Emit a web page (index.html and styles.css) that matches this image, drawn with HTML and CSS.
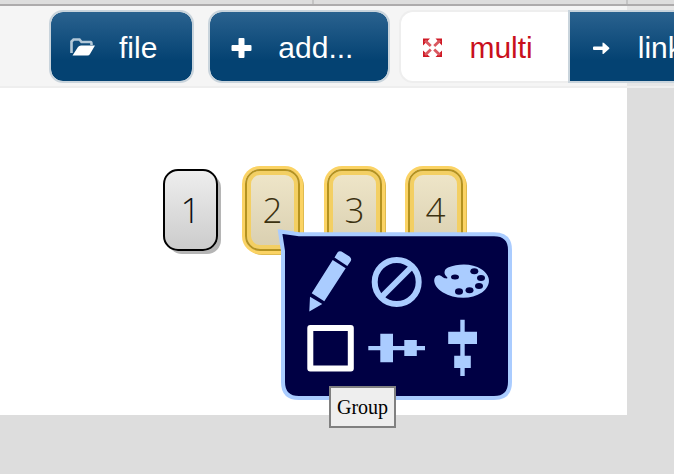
FILE: index.html
```html
<!DOCTYPE html>
<html lang="en">
<head>
<meta charset="utf-8">
<title>Diagram editor</title>
<link rel="stylesheet" href="styles.css">
</head>
<body>
<div class="ruler"><span></span><span></span></div>
<div class="editor">
  <header class="toolbar">
    <button class="tool" type="button">
      <svg class="glyph" viewBox="0 0 28 24" aria-hidden="true"><path d="M2.500 17V5.500l2-2h6l2 2.500h9q1 0 1 2v1" fill="none" stroke="#b3c8d8" stroke-width="2.600"/><path d="M3.500 19.500 9 11q1-1.500 3-1.500h14l-5 8.500q-.8 1.500-2.500 1.500H4z" fill="#fff"/></svg>
      file
    </button>
    <button class="tool" type="button">
      <svg class="glyph" viewBox="0 0 28 24" aria-hidden="true"><path d="M11.500 3h4v7h7v4h-7v7h-4v-7h-7v-4h7z" fill="#fff" stroke="#fff" stroke-width="2" stroke-linejoin="round"/></svg>
      add...
    </button>
    <div class="group">
      <button class="tool active" type="button" aria-pressed="true">
        <svg class="glyph" viewBox="0 0 28 24" aria-hidden="true"><g fill="#cf1824"><path d="M4 2.500h7L4 9.500zM16.500 2.500h6.500v7zM4 14.500l7 6.500H4zM23 14.500V21h-6.500z"/><path d="m6 4.500 15 14.500M21 4.500 6 19" stroke="#da5860" stroke-width="2.800" stroke-dasharray="8 4.800"/></g></svg>
        multi
      </button>
      <button class="tool" type="button">
        <svg class="glyph" viewBox="0 0 28 24" aria-hidden="true"><path d="M6 10.500h8.500V7q0-1 1.500 0l5 4.500q1 .8 0 1.500l-5 4.500q-1.500 1-1.500 0V14H6q-1 0-1-1v-1.500q0-1 1-1z" fill="#fff"/></svg>
        link
      </button>
    </div>
  </header>
  <main class="paper">
    <div class="node n1">1</div>
    <div class="node n2 selected">2</div>
    <div class="node n3 selected">3</div>
    <div class="node n4 selected">4</div>
    <div class="menu">
      <svg class="bubble" viewBox="0 0 240 176" aria-hidden="true"><path d="M4 5.500 23 8.300H218Q234 8.300 234 24V156Q234 172 218 172H23Q7 172 7 156V25Z"/></svg>
      <div class="actions">
        <button type="button" aria-label="Edit"><svg viewBox="0 0 66 66"><path d="M40.500 4.500q1.500-2 4-1l8 5q2.500 2 1.300 4.500l-3.500 5-12.800-8.500zM35.700 12l13 8.300-21.400 33-12.600-8zM13 48.700 25.300 56l-13 7.500z"/></svg></button>
        <button type="button" aria-label="Disable"><svg viewBox="0 0 66 66"><g fill="none" stroke="#acf" stroke-width="6"><circle cx="33.700" cy="34" r="22"/><path d="m18 49.500 31-31"/></g></svg></button>
        <button type="button" aria-label="Colour"><svg viewBox="0 0 66 66"><path d="M19 19.500C30 15 44 15.500 52 21 63 28 62 38 53 44.500 42 52 25 51 14 44.500 8 41 4 35 5.500 30.500 7 26.500 11 26.500 13.500 29 16.500 31 18.500 30.500 18.500 30c0-1-3-2.500-3-5.500Q15.500 21 19 19.500z"/><g fill="#004"><ellipse cx="26" cy="29" rx="4" ry="2.500"/><ellipse cx="45.300" cy="23.300" rx="4" ry="3"/><ellipse cx="52" cy="30" rx="4" ry="3"/><ellipse cx="50" cy="38" rx="4" ry="3"/><ellipse cx="40.500" cy="42.300" rx="4" ry="3"/><ellipse cx="30" cy="43.500" rx="4" ry="3.200"/></g></svg></button>
        <button type="button" aria-label="Group" aria-describedby="tip"><svg viewBox="0 0 66 66"><rect x="13.300" y="12.900" width="40.500" height="40.500" fill="none" stroke="#fff" stroke-width="6" stroke-linejoin="round"/></svg></button>
        <button type="button" aria-label="Align horizontally"><svg viewBox="0 0 66 66"><path d="M5.300 31H62v4.300H5.300zM17.300 18.700H30v28.600H17.300zM41.300 25h12.500v16H41.300z"/></svg></button>
        <button type="button" aria-label="Align vertically"><svg viewBox="0 0 66 66"><path d="M31.300 4.800h4.400V61h-4.400zM19.200 16.700H48V29H19.200zM25.200 40.800h16.600V53H25.200z"/></svg></button>
      </div>
      <div class="tooltip" id="tip" role="tooltip">Group</div>
    </div>
  </main>
</div>
</body>
</html>
```
FILE: styles.css
```css
* { box-sizing: border-box; }

body {
  margin: 0;
  min-height: 100vh;
  display: flex;
  flex-direction: column;
  overflow: hidden;
  background: #ddd;
  font-family: "Liberation Sans", sans-serif;
}

.ruler {
  display: flex;
  height: 6px;
  border-bottom: 2px solid #adabac;
}

.ruler span {
  flex: 0 0 314px;
  border-right: 2px solid #c4c4c4;
}

.editor {
  position: relative;
  flex: 1;
  display: flex;
}

.toolbar {
  position: absolute;
  z-index: 1;
  top: 0;
  left: 0;
  right: 0;
  display: flex;
  gap: 14px;
  padding: 4px 0 3px 49px;
  overflow: hidden;
  background: rgba(236, 236, 236, 0.55);
  border-bottom: 2px solid #eee;
}

.group {
  display: flex;
  margin-left: -5px;
}

.tool {
  display: flex;
  flex: none;
  align-items: center;
  gap: 22px;
  height: 73px;
  padding: 2px 35px 0 18px;
  border: 2px solid #c9d4dc;
  border-radius: 14px;
  background: linear-gradient(#2a628f, #044272 70%);
  background-clip: padding-box;
  color: #fff;
  font: 30px "Liberation Sans", sans-serif;
  white-space: nowrap;
}

.group .tool:first-child {
  border-radius: 14px 0 0 14px;
  border-right: 0;
}

.group .tool:last-child { border-radius: 0 14px 14px 0; }

.tool.active {
  background: #fff;
  border-color: #eee;
  color: #c9101c;
}

.glyph {
  width: 28px;
  height: 24px;
}

.paper {
  position: relative;
  flex: 1;
  margin: 0 47px 59px 0;
  background: #fff;
}

.node {
  position: absolute;
  top: 163px;
  width: 55px;
  height: 82px;
  border: 2px solid #000;
  border-radius: 15px;
  background: linear-gradient(#eee, #ccc);
  box-shadow: 4px 4px 0 -1px #b5b5b5;
  color: #111;
  font: 300 35px/78px "Open Sans", sans-serif;
  text-align: center;
}

.n1 { left: 163px; }
.n2 { left: 245px; }
.n3 { left: 327px; }
.n4 { left: 408px; }

.node.selected {
  border-color: #b49220;
  background: linear-gradient(#efe6c9, #d9cfb0);
  box-shadow: inset 0 0 0 4px #f3cf63, 0 0 0 3px #fbd364, 2px 2px 0 2px #e0bb50;
  color: #3b3110;
}

.menu {
  position: absolute;
  top: 220px;
  left: 276px;
  width: 240px;
  padding: 22px 21px 15px;
}

.bubble {
  position: absolute;
  inset: 0;
  width: 240px;
  height: 176px;
  fill: #004;
  stroke: #acf;
  stroke-width: 4px;
}

.actions {
  position: relative;
  display: grid;
  grid-template-columns: repeat(3, 66px);
  gap: 1px 0;
}

.actions button {
  height: 66px;
  padding: 0;
  border: 0;
  background: none;
}

.actions svg {
  display: block;
  width: 66px;
  height: 66px;
  fill: #acf;
}

.tooltip {
  position: absolute;
  top: 160px;
  left: 53px;
  padding: 8px 6px;
  border: 2px solid #808080;
  background: #eee;
  color: #000;
  font: 20px/22px "Liberation Serif", serif;
}
```
